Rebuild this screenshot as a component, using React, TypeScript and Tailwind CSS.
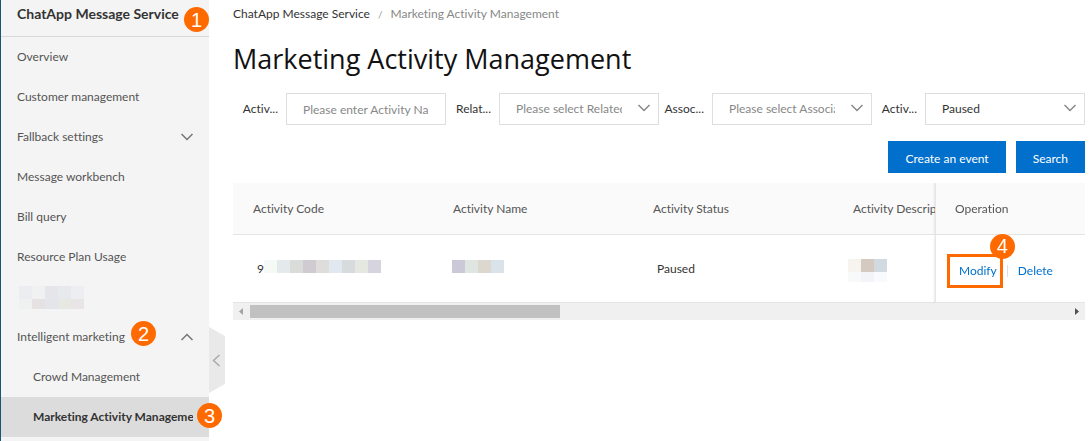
import clsx from 'clsx'
import type { ReactNode } from 'react'

const MENU = [
  { label: 'Overview' },
  { label: 'Customer management' },
  { label: 'Fallback settings', chevron: true },
  { label: 'Message workbench' },
  { label: 'Bill query' },
  { label: 'Resource Plan Usage' },
]

const COLUMNS = ['Activity Code', 'Activity Name', 'Activity Status', 'Activity Description']

function Chevron({ direction, className }: { direction: 'up' | 'down'; className?: string }) {
  return (
    <svg
      viewBox="0 0 14 8"
      fill="none"
      stroke="currentColor"
      strokeWidth="1.5"
      className={clsx('pointer-events-none h-2 w-3.5', className)}
    >
      <path d={direction === 'down' ? 'M1.500 1l5.500 5.500 5.500-5.500' : 'M1.500 7l5.500-5.500 5.500 5.500'} />
    </svg>
  )
}

function StepBadge({ step, className }: { step: number; className: string }) {
  return (
    <span
      className={clsx(
        'absolute z-20 flex size-[25px] items-center justify-center rounded-full bg-[#ff6a00] font-["Liberation_Sans",Arial,sans-serif] text-[20px] leading-none font-normal text-white',
        className,
      )}
    >
      {step}
    </span>
  )
}

// Masked values are shown as small rows of tinted blocks
function Mosaic({ rows }: { rows: string[][] }) {
  return (
    <span className="flex flex-col">
      {rows.map((row, i) => (
        <span key={i} className="flex">
          {row.map((color, j) => (
            <span
              key={j}
              className={clsx('w-[13px]', i === 0 ? 'h-[13px]' : 'h-[10px]')}
              style={{ backgroundColor: color }}
            />
          ))}
        </span>
      ))}
    </span>
  )
}

function Sidebar() {
  return (
    <aside className="relative w-[209px] shrink-0 border-l border-[#14557d] bg-[#f4f4f4] text-[#555]">
      <div className="relative flex h-[37px] items-center border-b border-[#d9d9d9] pb-2 pl-4 text-[14px] font-bold text-[#333]">
        ChatApp Message Service
        <StepBadge step={1} className="top-[7px] right-0" />
      </div>
      <nav>
        {MENU.map((item) => (
          <a key={item.label} href="#" className="flex h-10 items-center justify-between pr-[15px] pl-4">
            {item.label}
            {item.chevron && <Chevron direction="down" className="text-[#777]" />}
          </a>
        ))}
        <div className="flex h-10 items-center pl-[18px]">
          <Mosaic
            rows={[
              ['#ecedf0', '#eff2f1', '#e6e5ea', '#e8e9ed', '#edeef1'],
              ['#eef1f0', '#e6e1e3', '#e4e5eb', '#e8e8e2', '#e9e5e7'],
            ]}
          />
        </div>
        <a href="#" className="relative flex h-10 items-center justify-between pr-[15px] pl-4">
          Intelligent marketing
          <Chevron direction="up" className="text-[#777]" />
          <StepBadge step={2} className="top-1 left-[130px]" />
        </a>
        <a href="#" className="flex h-10 items-center pl-8">
          Crowd Management
        </a>
        <a
          href="#"
          aria-current="page"
          className="relative flex h-10 items-center bg-[#dcdcdc] pr-4 pl-8 font-bold text-[#333]"
        >
          <span className="overflow-hidden whitespace-nowrap">Marketing Activity Management</span>
          <StepBadge step={3} className="top-[6px] -right-[13px]" />
        </a>
      </nav>
      <button type="button" aria-label="Collapse menu" className="absolute top-[327px] left-full">
        <svg width="16" height="66" viewBox="0 0 16 66" fill="none">
          <path d="M0 0l16 9v48L0 66z" fill="#e9e9e9" />
          <path d="M10.500 28l-6 5.500 6 5.500" stroke="#aaa" strokeWidth="1.500" />
        </svg>
      </button>
    </aside>
  )
}

function Field({ id, label, children }: { id: string; label: string; children: ReactNode }) {
  return (
    <div className="flex items-center">
      <label htmlFor={id} className="w-[53px] shrink-0 pr-2 text-right text-[#333]">
        {label}
      </label>
      <div className="relative min-w-0 flex-1">{children}</div>
    </div>
  )
}

function SelectField({ id, label, value, muted }: { id: string; label: string; value: string; muted?: boolean }) {
  return (
    <Field id={id} label={label}>
      <select
        id={id}
        className={clsx(
          'h-8 w-full appearance-none border border-[#dedede] bg-white pr-9 pl-4',
          muted ? 'text-[#888]' : 'text-[#333]',
        )}
      >
        <option>{value}</option>
      </select>
      <Chevron direction="down" className="absolute top-[11px] right-2 text-[#888]" />
    </Field>
  )
}

function ActivityTable() {
  return (
    <div className="mt-[10px]">
      <div className="overflow-hidden">
        <table className="w-full min-w-[950px] table-fixed border-separate border-spacing-0 text-left">
          <thead>
            <tr className="h-[52px] text-[#555]">
              {COLUMNS.map((name) => (
                <th
                  key={name}
                  className="w-[200px] border-b border-[#e5e5e5] bg-[#fafafa] px-5 font-normal whitespace-nowrap"
                >
                  {name}
                </th>
              ))}
              <th className="sticky right-0 w-[150px] border-b border-l border-[#e5e5e5] bg-[#fafafa] px-[19px] font-normal shadow-[0_0_3px_rgba(0,0,0,0.15)]">
                Operation
              </th>
            </tr>
          </thead>
          <tbody>
            <tr className="h-[68px] text-[#333]">
              <td className="border-b border-[#e5e5e5] px-6">
                <div className="flex items-start">
                  9
                  <Mosaic
                    rows={[
                      ['#f5faf7', '#e4e9eb', '#dadcd9', '#cfcbd0', '#dedddb', '#e1e8f0', '#d7dbde', '#e5e8e0', '#d5d4df'],
                    ]}
                  />
                </div>
              </td>
              <td className="border-b border-[#e5e5e5] px-[19px] pb-1">
                <Mosaic rows={[['#cbc9d8', '#dfe5e1', '#dcd7cf', '#dae3ea']]} />
              </td>
              <td className="border-b border-[#e5e5e5] px-6">Paused</td>
              <td className="border-b border-[#e5e5e5] px-[15px] pt-1">
                <Mosaic
                  rows={[
                    ['#f7f4ef', '#d5cac2', '#d1d9e1'],
                    ['#f8faf9', '#f3f4f7', '#f9fafd'],
                  ]}
                />
              </td>
              <td className="sticky right-0 border-b border-l border-[#e5e5e5] bg-white pl-[23px] text-[#0070cc] shadow-[0_2px_3px_rgba(0,0,0,0.15)]">
                <div className="flex items-center pt-1">
                  <span className="relative">
                    <a href="#">Modify</a>
                    <span className="absolute -top-2 -right-[6px] -bottom-2 -left-3 border-3 border-[#ff6a00]" />
                    <StepBadge step={4} className="-top-[28px] -right-[18px]" />
                  </span>
                  <span className="mx-[10px] h-3 w-px bg-[#dedede]" />
                  <a href="#">Delete</a>
                </div>
              </td>
            </tr>
          </tbody>
        </table>
      </div>
      {/* Horizontal scroll track */}
      <div className="flex h-[17px] items-center bg-[#f0f0f0]">
        <svg viewBox="0 0 17 17" className="size-[17px] shrink-0" fill="#a3a3a3">
          <path d="M10 5v7L6 8.500z" />
        </svg>
        <div className="h-[13px] w-[310px] bg-[#c1c1c1]" />
        <svg viewBox="0 0 17 17" className="ml-auto size-[17px] shrink-0" fill="#505050">
          <path d="M7 5v7l4-3.500z" />
        </svg>
      </div>
    </div>
  )
}

export default function App() {
  return (
    <div className="flex min-h-screen bg-white font-['Lato','Open_Sans',sans-serif] text-[12px] leading-[18px] [font-variant-ligatures:none]">
      <Sidebar />
      <main className="min-w-0 flex-1 pt-[5px] pr-[6px] pl-6">
        <nav className="flex items-center">
          <a href="#" className="text-[#333]">
            ChatApp Message Service
          </a>
          <span className="mx-2 text-[10px] text-[#999]">/</span>
          <span className="text-[#888]">Marketing Activity Management</span>
        </nav>
        <h1 className="mt-4 font-['Open_Sans','Noto_Sans',sans-serif] text-[27px] leading-10 text-[#111]">
          Marketing Activity Management
        </h1>

        <form className="mt-[14px]">
          <div className="grid grid-cols-4">
            <Field id="activity-name" label="Activ...">
              <input
                id="activity-name"
                type="text"
                placeholder="Please enter Activity Na"
                className="h-8 w-full border border-[#dedede] bg-white px-4 text-[#333] placeholder:text-[#888]"
              />
            </Field>
            <SelectField id="related" label="Relat..." value="Please select Related" muted />
            <SelectField id="associated" label="Assoc..." value="Please select Associa" muted />
            <SelectField id="status" label="Activ..." value="Paused" />
          </div>
          <div className="mt-4 flex justify-end gap-[10px] text-white">
            <button type="button" className="h-8 bg-[#0070cc] px-[17px] pt-1">
              Create an event
            </button>
            <button type="button" className="h-8 bg-[#0070cc] px-[17px] pt-1">
              Search
            </button>
          </div>
        </form>

        <ActivityTable />
      </main>
    </div>
  )
}
